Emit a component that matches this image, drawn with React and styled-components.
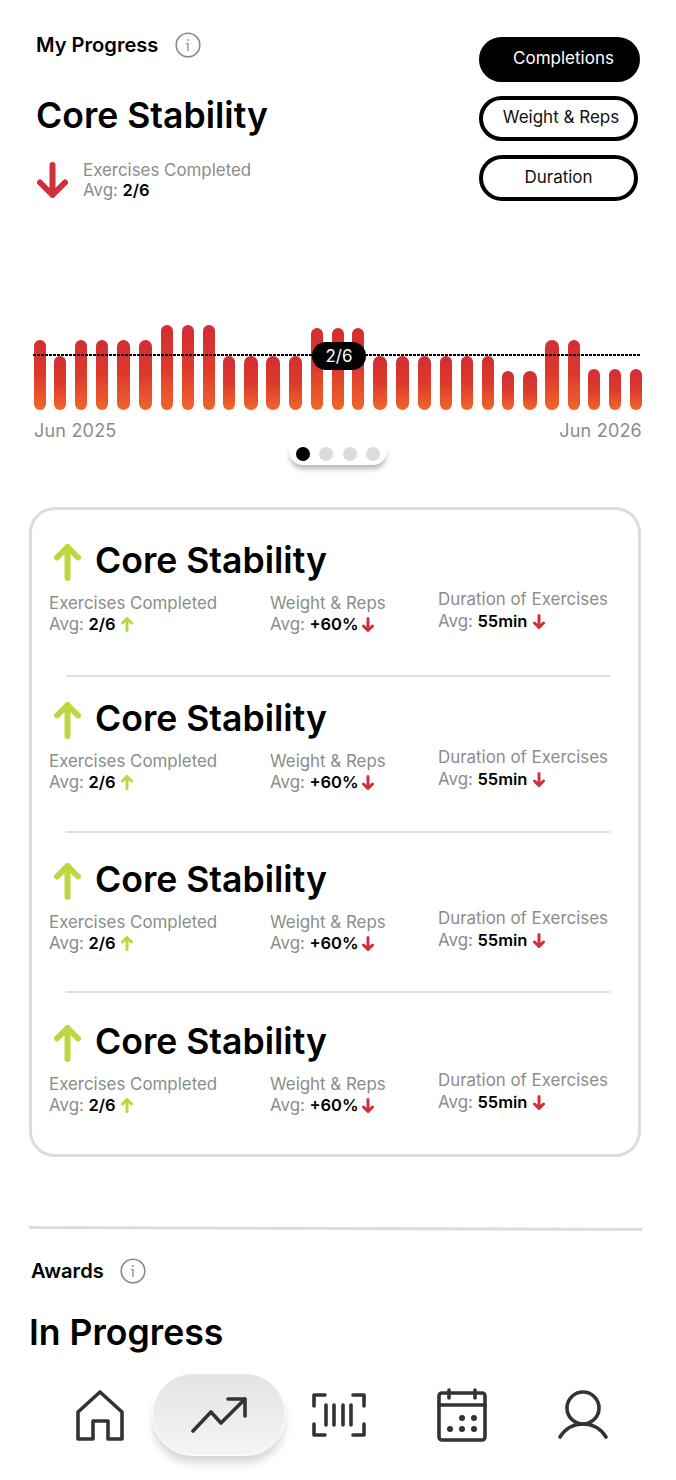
import React from 'react'
import styled, { createGlobalStyle } from 'styled-components'

const GlobalStyle = createGlobalStyle`
  html, body {
    margin: 0;
    padding: 0;
    background: #fff;
  }
  body {
    font-family: Inter, "Open Sans", sans-serif;
    color: #000;
  }
`

const Page = styled.div`
  position: relative;
  width: 676px;
  height: 1480px;
  overflow: hidden;
  background: #fff;
`

const Header = styled.header`
  display: flex;
  justify-content: space-between;
  padding: 37px 36px 0;
  height: 164px;
`

const HeaderLeft = styled.div`
  display: flex;
  flex-direction: column;
`

const LabelRow = styled.div`
  display: flex;
  align-items: center;
  gap: ${(p) => p.$gap}px;
  height: 16px;
`

const Label = styled.span`
  font-size: 20.1px;
  font-weight: 600;
  line-height: 16px;
`

const InfoSvg = styled.svg`
  width: 26px;
  height: 26px;
  flex: none;
`

const BigTitle = styled.h1`
  margin: ${(p) => p.$top}px 0 0;
  font-size: 35.6px;
  font-weight: 600;
  line-height: 44px;
`

const Summary = styled.div`
  display: flex;
  align-items: center;
  gap: 15px;
  margin: 22px 0 0 1px;
`

const ButtonColumn = styled.div`
  display: flex;
  flex-direction: column;
  align-items: flex-start;
  gap: 14px;
  margin-left: auto;
`

const Toggle = styled.button`
  box-sizing: border-box;
  width: ${(p) => (p.$active ? 161 : 159)}px;
  height: ${(p) => (p.$active ? 45 : 46)}px;
  padding: 0 0 3px ${(p) => p.$nudge || 0}px;
  border: 4px solid #000;
  border-radius: 24px;
  background: ${(p) => (p.$active ? '#000' : '#fff')};
  color: ${(p) => (p.$active ? '#fff' : '#111')};
  font-family: inherit;
  font-size: 17px;
`

const Stat = styled.div`
  display: flex;
  flex-direction: column;
  margin-top: ${(p) => p.$top || 0}px;
  font-size: 16.9px;
  line-height: ${(p) => p.$line || 21}px;
  color: #8c8c8c;
`

const StatValue = styled.div`
  display: flex;
  align-items: center;
  gap: ${(p) => p.$gap}px;
`

const Strong = styled.b`
  margin-left: 4.5px;
  font-size: 16.5px;
  font-weight: 600;
  color: #000;
`

const ChartWrap = styled.section`
  position: relative;
  margin-top: 124px;
  padding: 0 34px;
`

const Bars = styled.div`
  display: flex;
  align-items: flex-end;
  height: 85px;
`

const Bar = styled.div`
  flex: none;
  border-radius: 7px;
  background: linear-gradient(180deg, #d32d34 0%, #dd3a2c 50%, #ef672a 100%);
`

const AverageLine = styled.div`
  position: absolute;
  top: 29px;
  left: 33px;
  width: 607px;
  height: 2px;
  background: repeating-linear-gradient(90deg, #000 0 2.7px, transparent 2.7px 4px);
`

const AveragePill = styled.div`
  position: absolute;
  top: 17px;
  left: 312px;
  width: 54px;
  height: 28px;
  border-radius: 14px;
  background: #000;
  color: #fff;
  font-size: 17px;
  line-height: 28px;
  text-align: center;
`

const Axis = styled.div`
  display: flex;
  justify-content: space-between;
  margin: 10px 0 0;
  font-size: 18px;
  line-height: 22px;
  letter-spacing: 0.2px;
  color: #8c8c8c;
`

const Dots = styled.div`
  display: flex;
  gap: 9.5px;
  width: max-content;
  margin: 2px auto 0;
  padding: 3px 7px 4px;
  border-radius: 0 0 14px 14px;
  background: #fff;
  box-shadow: 0 5px 5px -1px rgba(0, 0, 0, 0.28);
`

const Dot = styled.span`
  width: 14px;
  height: 14px;
  border-radius: 50%;
  background: ${(p) => (p.$on ? '#000' : '#dcdcdc')};
`

const Card = styled.section`
  box-sizing: border-box;
  width: 612px;
  height: 650px;
  margin: 42px 0 0 29px;
  padding: 0 17px;
  border: 3px solid #dcdcdc;
  border-radius: 26px;
`

const Row = styled.article`
  box-sizing: border-box;
  height: ${(p) => p.$height}px;
  padding-top: ${(p) => p.$pad}px;
`

const RowHead = styled.div`
  display: flex;
  align-items: center;
  gap: 14px;
  height: 44px;
  padding-left: 5px;

  & > svg {
    margin-top: 2px;
  }
`

const RowStats = styled.div`
  display: grid;
  grid-template-columns: 221px 168px auto;
  margin-top: 10px;
`

const Divider = styled.hr`
  width: 544px;
  height: 2px;
  margin: 0 0 0 17px;
  border: 0;
  background: #dfdfdf;
`

const Section = styled.section`
  margin: 70px 34px 0 29px;
`

const Rule = styled.div`
  height: 3px;
  background: #dcdcdc;
  transform: rotate(0.18deg);
`

const AwardsLabel = styled(LabelRow)`
  margin: 33px 0 0 2px;
`

const Nav = styled.nav`
  position: absolute;
  left: 0;
  right: 0;
  bottom: 25px;
  display: flex;
  align-items: center;
  height: 81px;
  padding-left: 75px;
`

const NavItem = styled.div`
  display: flex;
  align-items: center;
  justify-content: center;
  flex: none;
  width: ${(p) => p.$w}px;
  margin-left: ${(p) => p.$left || 0}px;
`

const ActivePill = styled(NavItem)`
  height: 81px;
  border-radius: 40px;
  background: linear-gradient(180deg, #e4e4e4 0%, #f5f5f5 100%);
  box-shadow: 0 0 0 1px #fff, 0 8px 9px rgba(0, 0, 0, 0.16);
`

const NavSvg = styled.svg`
  display: block;
  fill: none;
  stroke: #333;
  stroke-width: 3.6;
  stroke-linecap: round;
  stroke-linejoin: round;
`

const InfoIcon = () => (
  <InfoSvg viewBox="0 0 26 26" fill="none" stroke="#8a8a8a">
    <circle cx="13" cy="13" r="11.8" strokeWidth="1.6" />
    <path d="M11.6 11.6H13V18.6" strokeWidth="1.3" strokeLinecap="round" strokeLinejoin="round" />
    <circle cx="12.8" cy="8" r="0.9" fill="#8a8a8a" stroke="none" />
  </InfoSvg>
)

// one arrow shape for all sizes, pointing up or down
const Arrow = ({ up, width, height, stroke }) => (
  <svg
    width={width}
    height={height}
    viewBox={`0 0 ${width} ${height}`}
    fill="none"
    stroke={up ? '#bcd740' : '#d12f3c'}
    strokeWidth={stroke}
    strokeLinecap="round"
    strokeLinejoin="round"
    style={{ flex: 'none' }}
  >
    {up ? (
      <path
        d={`M${width / 2} ${height - stroke / 2}V${stroke / 2}M${stroke / 2} ${width / 2}L${width / 2} ${stroke / 2}L${width - stroke / 2} ${width / 2}`}
      />
    ) : (
      <path
        d={`M${width / 2} ${stroke / 2}V${height - stroke / 2}M${stroke / 2} ${height - width / 2}L${width / 2} ${height - stroke / 2}L${width - stroke / 2} ${height - width / 2}`}
      />
    )}
  </svg>
)

// [width, height, gap before]
const bars = [
  [12, 70, 0], [12, 54, 8], [12, 70, 9], [12, 70, 9], [13, 70, 9], [13, 70, 9],
  [12, 85, 9], [12, 85, 9], [12, 85, 9], [12, 54, 8], [14, 54, 9], [14, 54, 8],
  [13, 54, 9], [12, 82, 9], [12, 82, 9], [12, 82, 8], [14, 54, 9], [13, 54, 9],
  [13, 54, 9], [12, 54, 9], [12, 54, 9], [12, 54, 9], [12, 39, 8], [14, 39, 9],
  [14, 70, 8], [12, 70, 9], [12, 41, 8], [12, 41, 9], [12, 41, 9],
]

const rows = [
  { height: 165, pad: 29 },
  { height: 154, pad: 20 },
  { height: 158, pad: 25 },
  { height: 123, pad: 27 },
]

const ProgressRow = ({ height, pad }) => (
  <Row $height={height} $pad={pad}>
    <RowHead>
      <Arrow up width={27} height={37} stroke={6} />
      <BigTitle $top={0}>Core Stability</BigTitle>
    </RowHead>
    <RowStats>
      <Stat>
        Exercises Completed
        <StatValue $gap={5}>
          <span>Avg:<Strong>2/6</Strong></span>
          <Arrow up width={12} height={15} stroke={3} />
        </StatValue>
      </Stat>
      <Stat>
        Weight &amp; Reps
        <StatValue $gap={3}>
          <span>Avg:<Strong>+60%</Strong></span>
          <Arrow width={12} height={15} stroke={3} />
        </StatValue>
      </Stat>
      <Stat $top={-5} $line={22}>
        Duration of Exercises
        <StatValue $gap={6}>
          <span>Avg:<Strong>55min</Strong></span>
          <Arrow width={12} height={15} stroke={3} />
        </StatValue>
      </Stat>
    </RowStats>
  </Row>
)

export default function App() {
  return (
    <>
      <GlobalStyle />
      <Page>
        <Header>
          <HeaderLeft>
            <LabelRow $gap={17}>
              <Label>My Progress</Label>
              <InfoIcon />
            </LabelRow>
            <BigTitle $top={41}>Core Stability</BigTitle>
            <Summary>
              <Arrow width={31} height={36} stroke={6} />
              <Stat $line={20}>
                Exercises Completed
                <span>Avg:<Strong>2/6</Strong></span>
              </Stat>
            </Summary>
          </HeaderLeft>
          <ButtonColumn>
            <Toggle $active $nudge={8}>Completions</Toggle>
            <Toggle $nudge={5}>Weight &amp; Reps</Toggle>
            <Toggle>Duration</Toggle>
          </ButtonColumn>
        </Header>

        <ChartWrap>
          <Bars>
            {bars.map(([w, h, gap], i) => (
              <Bar key={i} style={{ width: w, height: h, marginLeft: gap }} />
            ))}
          </Bars>
          <AverageLine />
          <AveragePill>2/6</AveragePill>
          <Axis>
            <span>Jun 2025</span>
            <span>Jun 2026</span>
          </Axis>
          <Dots>
            <Dot $on />
            <Dot />
            <Dot />
            <Dot />
          </Dots>
        </ChartWrap>

        <Card>
          {rows.map((r, i) => (
            <React.Fragment key={i}>
              <ProgressRow {...r} />
              {i < rows.length - 1 && <Divider />}
            </React.Fragment>
          ))}
        </Card>

        <Section>
          <Rule />
          <AwardsLabel $gap={16}>
            <Label>Awards</Label>
            <InfoIcon />
          </AwardsLabel>
          <BigTitle $top={32}>In Progress</BigTitle>
        </Section>

        <Nav>
          <NavItem $w={50}>
            <NavSvg width="50" height="52" viewBox="0 0 50 52">
              <path d="M3 50V23L25 3L47 23V50H33V32H18V50Z" />
            </NavSvg>
          </NavItem>
          <ActivePill $w={132} $left={28}>
            <NavSvg width="56" height="36" viewBox="0 0 56 36">
              <path d="M2 34L20 15L30 26L54 2M37 2H54V19" />
            </NavSvg>
          </ActivePill>
          <NavItem $w={56} $left={26}>
            <NavSvg width="56" height="46" viewBox="0 0 56 46">
              <path d="M14 3H3V14M42 3H53V14M3 32V43H14M53 32V43H42M15 13V33M23 13V33M32 13V33M40 13V33" />
            </NavSvg>
          </NavItem>
          <NavItem $w={52} $left={69}>
            <NavSvg width="52" height="56" viewBox="0 0 52 56">
              <rect x="3" y="6" width="46" height="47" rx="3" />
              <path d="M3 18H49M13 3V11M39 3V11" />
              <g fill="#333" stroke="none">
                <circle cx="26" cy="31" r="3" />
                <circle cx="38" cy="31" r="3" />
                <circle cx="14" cy="42" r="3" />
                <circle cx="26" cy="42" r="3" />
                <circle cx="38" cy="42" r="3" />
              </g>
            </NavSvg>
          </NavItem>
          <NavItem $w={54} $left={68}>
            <NavSvg width="54" height="52" viewBox="0 0 54 52">
              <circle cx="27" cy="19" r="16" />
              <path d="M4 48C9 40 17 35 27 35S45 40 50 48" />
            </NavSvg>
          </NavItem>
        </Nav>
      </Page>
    </>
  )
}
